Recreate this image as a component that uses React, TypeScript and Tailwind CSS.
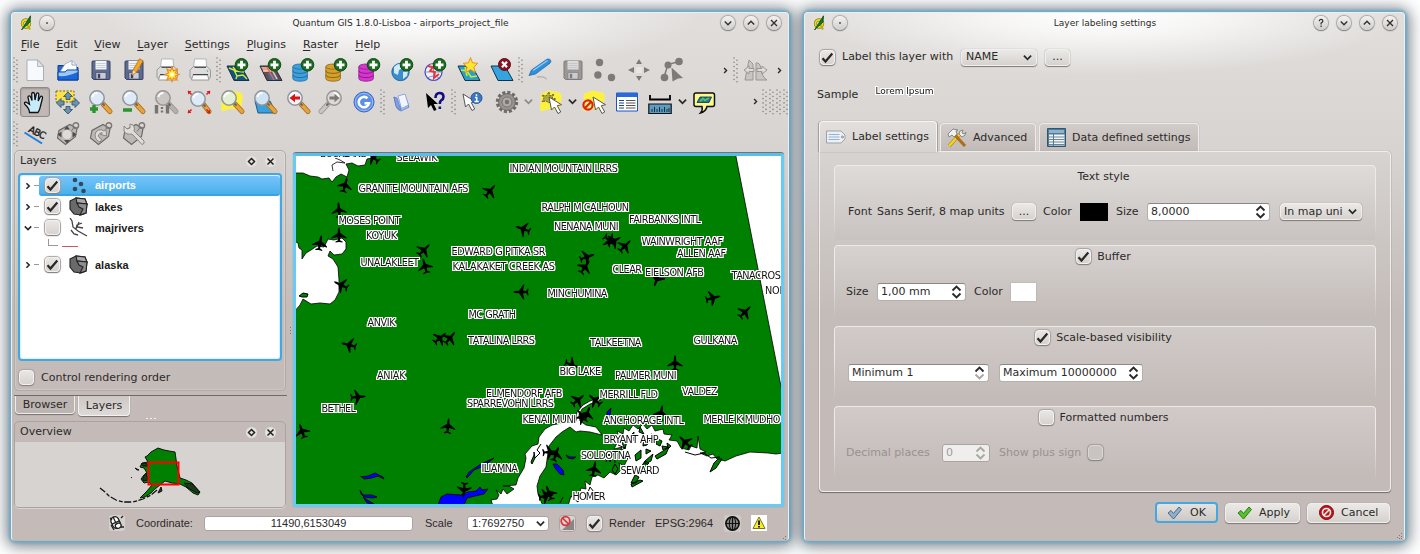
import React from "react";

/* ---------- toolbar icons, all on a 24x24 grid ---------- */

const Plus = () => (
  <g>
    <circle cx="15.5" cy="6.8" r="6.3" fill="#1d6b22" stroke="#0f4a14" />
    <path d="M15.5 2.8v8M11.5 6.8h8" stroke="#fff" strokeWidth="2.8" />
  </g>
);
const Db = ({ c, d }: { c: string; d: string }) => (
  <g>
    <path d="M.8 9v11.5c0 3.6 14.6 3.6 14.6 0V9z" fill={c} stroke={d} strokeWidth=".8" />
    <ellipse cx="8.1" cy="8.6" rx="7.3" ry="2.6" fill={c} stroke={d} strokeWidth=".8" />
    <path d="M.8 12.8c0 3.4 14.6 3.4 14.6 0M.8 17c0 3.4 14.6 3.4 14.6 0" fill="none" stroke={d} />
  </g>
);
const Lens = ({ cx = 9, cy = 8, f = "#dfeaf8", s = "#8f959c", h = "#e8a33d", d = "#a06a1c" }) => (
  <g>
    <path d={`M${cx + 6} ${cy + 6}L22 21.5`} stroke={d} strokeWidth="5" strokeLinecap="round" />
    <path d={`M${cx + 6} ${cy + 6}L22 21.5`} stroke={h} strokeWidth="3.4" strokeLinecap="round" />
    <path d={`M${cx + 5} ${cy + 5}l2.6 2.6`} stroke="#666" strokeWidth="2" />
    <circle cx={cx} cy={cy} r="7.2" fill={f} stroke={s} strokeWidth="1.5" />
    <path d={`M${cx - 4.6} ${cy - 1}a5 5 0 0 1 5-4`} stroke="#fff" strokeWidth="1.8" fill="none" />
  </g>
);
const Floppy = ({ c, e, p = "#f2f4f8" }: { c: string; e: string; p?: string }) => (
  <g>
    <path d="M3.5 3h16.5q1 0 1 1v16.5q0 1-1 1H4.5l-1.5-1.5V4z" fill={c} stroke={e} />
    <path d="M6.5 3h11v8.5h-11z" fill={p} />
    <path d="M7.5 5.5h9M7.5 7.5h9M7.5 9.5h9" stroke="#b9bec9" strokeWidth=".7" />
    <path d="M7 14.5h10v6.5H7z" fill="#c9ccd3" stroke={e} strokeWidth=".6" />
    <path d="M8.8 15.8h2.4v4.4H8.8z" fill={e} />
  </g>
);
const Printer = () => (
  <g>
    <path d="M6.5 1h11.5l.8 9H5.5z" fill="#fdfdfd" stroke="#aaa" strokeWidth=".8" />
    <path d="M2 12l3.5-3.5h13.500L22.500 12v7q0 1-1 1h-18.500q-1 0-1-1z" fill="#dcdcdc" stroke="#8a8a8a" strokeWidth=".8" />
    <path d="M6.5 9.5h11.5" stroke="#555" />
    <path d="M5 17h14.5l1.5 5H3.5z" fill="#fbfbfb" stroke="#888" strokeWidth=".8" />
    <path d="M5 16.5h15" stroke="#444" />
    <circle cx="19.5" cy="13" r=".8" fill="#4b4" />
  </g>
);
const Burst = () => (
  <g>
    <path d="M17 9l1.500 4 3.500-2-1.500 4 3.500 1.500-3.500 1.500 1.500 4-3.500-2-1.500 3.500-1.500-3.500-3.500 2 1.500-4-3.500-1.500 3.500-1.500-1.500-4 3.500 2z" fill="#ffe93b" stroke="#f08a1c" strokeWidth="1.2" />
    <circle cx="17" cy="16.5" r="2" fill="#fffde0" />
  </g>
);
const Tag = ({ children }: { children?: React.ReactNode }) => (
  <g>
    <path d="M1.500 16L3 8.500 14 2.500l7 4-1.500 8L9.500 22.500z" fill="#bcb8b6" stroke="#6d6967" strokeWidth="1.2" />
    <circle cx="19.8" cy="3.5" r="2.8" fill="none" stroke="#7b7775" strokeWidth="1.4" />
    <path d="M18 5.5l-3 4" stroke="#7b7775" />
    {children}
  </g>
);
const MapTile = ({ c }: { c: string }) => (
  <path d="M1 8h14l8 14.500H8z" fill={c} stroke="#13324d" strokeWidth="1" />
);
const Pointer = ({ x, y }: { x: number; y: number }) => (
  <path transform={`translate(${x} ${y})`} d="M0 0l2.500 13 3-3 3.500 6.500 2.700-1.500-3.400-6.300 4.200-1z" fill="#fff" stroke="#555" strokeWidth="1" />
);
const Blob = () => (
  <path d="M2 4.500q2-2.500 6-2.500 3-2.500 7 0 6 0 7 2.500 1 4-.5 7 1 5-2 7-5 1-8 0-4 0-8 2.500-3 0-2-4 1-7 .5-12.500z" fill="#fff13a" stroke="#f5ee6a" />
);

const icons: Record<string, React.ReactNode> = {
  file: (
    <g>
      <path d="M4 2h11l5.500 6v14.500H4z" fill="#f8f9fc" stroke="#a9adb8" />
      <path d="M14.500 2v6.500h6z" fill="#dfe3ec" stroke="#a9adb8" strokeWidth=".8" />
    </g>
  ),
  open: (
    <g>
      <path d="M2 10V7.500h7l1 2h12V22H2z" fill="#2767c8" stroke="#0c3f96" />
      <path d="M4 14L9 6l7-3.500L20.500 7v7z" fill="#fbfcfe" stroke="#8fa4c4" strokeWidth=".8" />
      <path d="M16 2.500v4.500h4.500" fill="none" stroke="#8fa4c4" />
      <path d="M2 14h7l2-2h11v10H2z" fill="#1c68d8" stroke="#0c3f96" />
      <path d="M2.600 18q9 1 19-4v-1.500H11l-2 2H2.600z" fill="#9cc8f8" />
    </g>
  ),
  save: <Floppy c="#5d6b92" e="#39425e" />,
  saveas: (
    <g>
      <Floppy c="#5d6b92" e="#39425e" />
      <path d="M10 17l1-5L17.500.8l3.700 2L14.500 14z" fill="#f7a823" stroke="#b36e0c" strokeWidth=".8" />
      <path d="M10 17l1-5 3.500 2z" fill="#fbe3b8" stroke="#a47434" strokeWidth=".5" />
    </g>
  ),
  printnew: (<g><Printer /><Burst /></g>),
  print: <Printer />,
  vector: (
    <g>
      <MapTile c="#12547c" />
      <path d="M3 10l5 2 3 6 6-1 4 4M7 9l3 4 8 1M11 18l-1 3" fill="none" stroke="#d8e83a" strokeWidth="1.4" />
      <Plus />
    </g>
  ),
  raster: (
    <g>
      <MapTile c="#6d4a48" />
      <path d="M2 9h8l3 5H5z" fill="#e9a27c" /><path d="M8 15h8l4 7H11z" fill="#3f6f8c" />
      <path d="M4 13l9-1 5 9" fill="none" stroke="#f3c7a8" strokeWidth="1.5" /><path d="M8 9l7 13" stroke="#e0607a" strokeWidth="1.5" />
      <Plus />
    </g>
  ),
  db1: (<g><Db c="#3f9fd8" d="#1d6ea6" /><Plus /></g>),
  db2: (<g><Db c="#d6a02c" d="#8c6410" /><Plus /></g>),
  db3: (<g><Db c="#d735d0" d="#8d1a8c" /><Plus /></g>),
  wms: (
    <g>
      <circle cx="9.500" cy="14" r="8.700" fill="#3a8ccb" stroke="#1c5c95" strokeWidth=".8" />
      <path d="M3 9q4-4 8-3l1 4-4 2-1 5-4-2zM12 14l5-1-1 5-4 3z" fill="#cfeaf8" />
      <Plus />
    </g>
  ),
  wfs: (
    <g>
      <circle cx="9.500" cy="14" r="8.500" fill="#f3f0f3" stroke="#3848c8" strokeWidth="1.2" />
      <path d="M9.500 5.500v17M1 14h17M3.500 8q6 4 12 0M3.500 20q6-4 12 0" stroke="#6a7ae0" fill="none" strokeWidth=".8" />
      <path d="M4 8l5 1-3 4 5 1-1 6 5-4M12 8l-2 3" fill="none" stroke="#ee3333" strokeWidth="1.8" />
      <Plus />
    </g>
  ),
  newshp: (
    <g>
      <MapTile c="#2b9fc8" />
      <path d="M4 12l6 1 4 6 6-1M8 9l2 9" fill="none" stroke="#c8e83a" strokeWidth="1.6" />
      <path d="M13.500-.5l2 5.300 5.300.5-4 3.700 1.400 5.500-4.700-3-4.700 3L10.200 9l-4-3.700 5.300-.5z" fill="#ffe52e" stroke="#e8941c" strokeWidth="1" />
    </g>
  ),
  remove: (
    <g>
      <MapTile c="#35a3de" />
      <circle cx="14.500" cy="6.500" r="6" fill="#8c1220" stroke="#5e0a14" />
      <path d="M12 3.800l5 5.400M17 3.800l-5 5.400" stroke="#fff" strokeWidth="2.2" />
    </g>
  ),
  pen: (
    <g>
      <path d="M9 19q8-1 9.500 2.500" stroke="#b9b5b3" strokeWidth="1.5" fill="none" />
      <path d="M1 17.500L3.500 12 19 1.200q2.500-.8 3.500.8t-.5 3.200L7.500 16z" fill="#2f8fd8" stroke="#1d6fb5" strokeWidth=".8" />
      <path d="M5 12.500L19.500 2.500" stroke="#8fcbf4" strokeWidth="1.4" />
    </g>
  ),
  savegray: <Floppy c="#9b9795" e="#7f7b79" p="#dddad8" />,
  dots: (<g fill="#7e7a78"><circle cx="5.500" cy="4.500" r="3.700" /><circle cx="3.900" cy="17" r="3.700" /><circle cx="17.500" cy="19.500" r="3.700" /></g>),
  move4: (
    <g fill="#7e7a78">
      <path d="M12 1l3 5H9zM12 23l3-5H9zM1 12l6-3v6zM23 12l-6-3v6z" />
      <rect x="9" y="9" width="6" height="6" fill="#e9e6e4" />
    </g>
  ),
  node: (
    <g fill="#7e7a78">
      <path d="M4 19L8 6.500 19 3.500" fill="none" stroke="#7e7a78" strokeWidth="1.5" />
      <circle cx="4.500" cy="19.500" r="3.800" /><circle cx="8" cy="7" r="3.500" /><circle cx="19" cy="3.500" r="3.800" /><path d="M11.500 9.500l11.500 10.500-5 .5-5.500 3z" />
    </g>
  ),
  mirror: (
    <g fill="#c9c5c3" stroke="#9a9694">
      <path d="M2 22L6 2l4 4v16zM13 22V5q4-1 5 6 1 8 6 11z" />
      <path d="M1 12l5-4v2.500h5v3H6V16zM24 12l-5-4v2.500h-5v3h5V16z" fill="#dedbd9" />
    </g>
  ),
  hand: <path d="M6.500 22.500q0-4-4.500-8c-1.500-2 .5-3 2.200-1.700l2.300 1.500L5 7.500c-.2-2 2-2.300 2.700-.4L9 10.500 8.700 4c.1-2 2.500-2 2.800 0L12 10l1.300-6c.5-1.700 2.500-1.400 2.500.4L15.200 11l2-4c1-1.500 2.700-.7 2.300 1L17.500 16q-.5 3.500-2.500 6.500z" fill="#c7ebf8" stroke="#111" strokeWidth="1.3" />,
  pan: (
    <g>
      <path d="M1 1h18v11H1z" fill="#fbe24c" stroke="#5a4a00" strokeDasharray="2 1.5" strokeWidth=".8" />
      <path d="M13 2l4.500 4.500H15v3h-4v-3H8.500zM13 24l4.500-4.500H15v-3h-4v3H8.500zM1.500 13L6 8.500V11h3v4H6v2.500zM24.500 13L20 8.500V11h-3v4h3v2.500z" fill="#6a94ae" stroke="#36566b" strokeWidth=".9" />
    </g>
  ),
  zoomin: (<g><Lens /><path d="M6 15v8M2 19h8" stroke="#2a9430" strokeWidth="3.4" /></g>),
  zoomout: (<g><Lens /><path d="M2 20h9" stroke="#2a9430" strokeWidth="3.6" /></g>),
  zoom11: (
    <g>
      <Lens f="#c9c6c4" s="#9a9694" h="#b5b1af" d="#95918f" />
      <path d="M2.500 15v8.500M13.500 15v8.500" stroke="#777371" strokeWidth="3.4" /><path d="M8 17v2M8 20.500v2" stroke="#777371" strokeWidth="2.4" />
    </g>
  ),
  zoomfull: (
    <g>
      <Lens cx={11} cy={9} />
      <path d="M1 1l3.500 3.500M23 1l-3.500 3.500M1 23l3.500-3.500M23 23l-3.500-3.500" stroke="#dd1a1a" strokeWidth="1.5" />
      <path d="M1 1h3.500L1 4.500zM23 1h-3.500l3.500 3.500zM1 23v-3.500l3.500 3.500zM23 23h-3.500l3.500-3.500z" fill="#dd1a1a" />
    </g>
  ),
  zoomsel: (<g><Blob /><Lens f="#e2efd4" /></g>),
  zoomlayer: (<g><path d="M2 11h15l6 12H5z" fill="#3a9fda" stroke="#1a5a86" /><Lens f="#cfe4f2" /></g>),
  zoomlast: (<g><Lens cx={9} cy={8} f="#f1f3f6" /><path d="M3.500 8L9 3.800v2.700h5v3H9v2.700z" fill="#d81414" /></g>),
  zoomnext: (
    <g transform="matrix(-1 0 0 1 24 0)">
      <Lens f="#dcd9d7" s="#9a9694" h="#c9c5c3" d="#95918f" />
      <g transform="matrix(-1 0 0 1 18 0)"><path d="M14.500 8L9.500 3.800v2.700h-5v3h5v2.700z" fill="#7d7977" /></g>
    </g>
  ),
  refresh: (
    <g>
      <circle cx="12" cy="12" r="10" fill="#5c8ee6" stroke="#3d68c0" />
      <circle cx="12" cy="12" r="8.700" fill="none" stroke="#a9c6f6" strokeWidth=".8" />
      <path d="M15.500 8.300a5.200 5.200 0 1 0 1.500 5H12.500" fill="none" stroke="#fff" strokeWidth="2.6" />
    </g>
  ),
  book: (
    <g>
      <path d="M4 7l2 9q1 4 5 5l8-4-3-9-3 8-5 1z" fill="#aac2f2" stroke="#6a86cf" />
      <path d="M4 7l3 1 4 12q-4-1-5-4z" fill="#7fa0e4" stroke="#5a78c4" strokeWidth=".7" />
      <path d="M8 6l7-2 3.500 11-7 3.500z" fill="#f0f5fe" stroke="#7f99d8" strokeWidth=".8" />
    </g>
  ),
  whatsthis: (
    <g>
      <path d="M3 3l2 15 3-3 3 6 2.500-1.300L10.700 14H15z" fill="#000" />
      <path d="M12.500 8q0-5 4-5t4 4q0 2-2.500 3.500-1.200 1-1.200 3.500M16.800 16.500V19" fill="none" stroke="#101080" strokeWidth="2.6" />
    </g>
  ),
  identify: (
    <g>
      <Pointer x={2} y={4} />
      <circle cx="15.500" cy="8" r="5.500" fill="#3c77c2" stroke="#295a9b" /><path d="M15.500 4.200v1.800M14 7.500h1.700V11.300M13.500 11.500h4.300" stroke="#fff" strokeWidth="1.500" fill="none" />
    </g>
  ),
  gear: (
    <g>
      <circle cx="12" cy="12" r="9.700" fill="none" stroke="#6f6b69" strokeWidth="3" strokeDasharray="3.050 2.030" />
      <circle cx="12" cy="12" r="8.400" fill="#979391" stroke="#5f5b59" strokeWidth=".8" />
      <circle cx="12" cy="12" r="5" fill="#aeaaa8" stroke="#787472" />
      <circle cx="12" cy="12" r="2.200" fill="#77706e" />
    </g>
  ),
  select: (
    <g>
      <Blob />
      <path d="M10 2l1 4 4-2-2 4 4 1-4 1-3 3-3-2-4 1 2-4-2-3 4 1z" fill="#b0a83a" stroke="#444" strokeWidth=".8" strokeDasharray="2 1" />
      <Pointer x={10} y={7} />
    </g>
  ),
  deselect: (
    <g>
      <Blob /><Pointer x={11} y={7} />
      <circle cx="6" cy="15" r="4.600" fill="#fff" fillOpacity=".3" stroke="#e02010" strokeWidth="2.2" /><path d="M2.800 18.200l6.400-6.400" stroke="#e02010" strokeWidth="2.2" />
    </g>
  ),
  table: (
    <g>
      <path d="M1.500 3h21v18h-21z" fill="#fff" stroke="#1b55c4" />
      <path d="M1.500 3h21v4h-21z" fill="#2a68dc" />
      <path d="M4 10.500h5M4 13h5M4 15.500h5M4 18h5" stroke="#1b3f9a" /><path d="M11 10.500h9.500M11 13h9.500M11 15.500h9.500M11 18h9.500" stroke="#555" />
    </g>
  ),
  measure: (
    <g>
      <path d="M2 5v4.500h20V5" fill="none" stroke="#000" strokeWidth="1.8" />
      <path d="M.8 14h22.400v9.500H.8z" fill="#5c9bc2" stroke="#111" strokeWidth="1.2" />
      <path d="M4 22v-3M6.500 22v-5M9 22v-3M11.500 22v-5M14 22v-3M16.500 22v-5M19 22v-3M21 22v-4" stroke="#12303f" />
    </g>
  ),
  tip: (
    <g>
      <path d="M4 3h16.500q2 0 2 2v9.500q0 2-2 2H15q-1 5-6.500 6.500Q11 20 10 16.500H4q-2 0-2-2V5q0-2 2-2z" fill="#fdf98c" stroke="#111" strokeWidth="1.500" />
      <path d="M8 7h11.500l-2.500 5.500H5z" fill="#2a6fae" stroke="#0e2d4c" strokeWidth=".8" /><path d="M8 11.500l3-3 2 2 4-2.500" stroke="#4fc94a" strokeWidth="1.7" fill="none" />
    </g>
  ),
  abc: (
    <g>
      <text x="5" y="9.500" transform="rotate(26 5 9)" fontSize="9.500" fontFamily="DejaVu Sans, sans-serif" textLength="18" stroke="#111" strokeWidth=".3" fill="#111">ABC</text>
      <path d="M1.500 10.500L19 21.500" stroke="#1b7ee0" strokeWidth="2" />
    </g>
  ),
  tagmove: (<Tag><circle cx="11" cy="12.500" r="4.500" fill="#dedbd9" /><path d="M11 4l3 3.500H8zM11 21.500l3-3.500H8zM1.500 12.500L5.500 9.500v6zM20.500 12.500L16.500 9.500v6z" fill="#4f4b49" /></Tag>),
  tagrot: (<Tag><path d="M6 13a5.500 5.500 0 0 1 9-4l2-1.500.5 6.500-6-1.500 2-1.500a3 3 0 0 0-4 3q0 2 3 3l-1 3q-5-1-5.500-7z" fill="#dedbd9" stroke="#8a8684" /></Tag>),
  tagedit: (<Tag><path d="M2 4l3 3 3-1V2q4 0 4.500 4l-.5 3 10 10q1 3-2 3.500L10 12q-6 1-8-3z" fill="#dedbd9" stroke="#8a8684" /></Tag>),
};

const Ico = ({ n }: { n: string }) => (
  <div className="flex h-6 w-[33px] shrink-0 items-center justify-center">
    <svg width="24" height="24" viewBox="0 0 24 24" fill="none" className="overflow-visible">{icons[n]}</svg>
  </div>
);
const handleDots = [0, 4.3, 8.6, 12.9, 17.2, 21.5];
const Handle = () => (
  <svg width="5" height="26" viewBox="0 0 5 26" className="shrink-0">
    {handleDots.map((y) => (
      <g key={y} fill="#8b8684"><circle cx="1" cy={y + 1} r=".8" /><circle cx="4" cy={y + 3.2} r=".8" /></g>
    ))}
  </svg>
);
const Chev = ({ d = "down", c = "#2c2a29", w = 9 }: { d?: "down" | "right" | "up"; c?: string; w?: number }) => (
  <svg width={w} height={w} viewBox="0 0 10 10" fill="none" className="shrink-0">
    <path d={d === "down" ? "M1 3l4 4 4-4" : d === "up" ? "M1 7l4-4 4 4" : "M3 1.500L6.500 5 3 8.500"} stroke={c} strokeWidth="2" />
  </svg>
);

/* ---------- widgets ---------- */

const Round = ({ k }: { k: string }) => (
  <div className="flex h-[14px] w-[14px] shrink-0 items-center justify-center rounded-full bg-linear-to-b from-[#f4f3f2] to-[#d0cdca] shadow-[0_1px_1px_#86817f,0_0_1px_1px_#aaa6a4]">
    <svg width="10" height="10" viewBox="0 0 10 10" fill="none" stroke="#33302f" strokeWidth="1.4">
      {k === "dot" && <circle cx="5" cy="5" r=".9" fill="#444" stroke="none" />}
      {k === "down" && <path d="M1.800 3.500L5 6.700l3.200-3.200" />}
      {k === "up" && <path d="M1.800 6.500L5 3.300l3.200 3.200" />}
      {k === "x" && <path d="M2 2l6 6M8 2L2 8" />}
      {k === "q" && <path d="M3.300 3.200q0-1.800 1.800-1.800t1.800 1.500Q6.900 4 5.100 5v1.400M5.100 7.500V9" strokeWidth="1.2" />}
    </svg>
  </div>
);
const Logo = () => (
  <svg width="13" height="16" viewBox="0 0 13 16" fill="none">
    <circle cx="6" cy="8.500" r="3.600" stroke="#7c7a10" strokeWidth="3.2" /><circle cx="6" cy="8.500" r="3.600" stroke="#e4d81c" strokeWidth="2" />
    <path d="M8 11l2 3.500" stroke="#b5ac14" strokeWidth="2" />
    <path d="M1.500 15L10.500.8l-.5 6.200L4.500 12z" fill="#1d7a24" stroke="#07420c" strokeWidth=".8" />
  </svg>
);
const Check = ({ on = false, dim = false }: { on?: boolean; dim?: boolean }) => (
  <div className={dim
    ? "flex h-[15px] w-[15px] shrink-0 items-center justify-center rounded-[4px] border border-[#dcd8d5] bg-[#c9c4c1] shadow-[0_1px_1px_#8b8583,0_0_1px_1px_#a39d9a]"
    : "flex h-[15px] w-[15px] shrink-0 items-center justify-center rounded-[4px] border border-[#f3f1f0] bg-linear-to-b from-[#e9e7e5] to-[#d6d2cf] shadow-[0_1px_1px_#857f7d,0_0_1px_1px_#a9a4a2]"}>
    {on && (
      <svg width="13" height="13" viewBox="0 0 13 13" fill="none"><path d="M1.500 7.200l3 3.300 6.800-8" stroke="#2a2827" strokeWidth="2.2" /></svg>
    )}
  </div>
);
const btn = "flex shrink-0 items-center rounded-[4px] border border-[#f1efee] bg-linear-to-b from-[#ebe9e7] to-[#d6d2ce] shadow-[0_1px_1px_#7e7977,0_0_1px_#8e8987]";
const field = "flex shrink-0 items-center justify-between rounded-[3px] border border-[#b5afad] border-t-[#8c8785] bg-white";
const Arrows = ({ up = "#2c2a29", dn = "#2c2a29" }: { up?: string; dn?: string }) => (
  <svg width="11" height="14" viewBox="0 0 11 14" fill="none" strokeWidth="1.9">
    <path d="M1.500 5.500l4-4 4 4" stroke={up} /><path d="M1.500 8.500l4 4 4-4" stroke={dn} />
  </svg>
);
const TitleBar = ({ title, q }: { title: string; q?: boolean }) => (
  <div className="flex h-[19px] shrink-0 items-center justify-between pl-[8px] pr-[7px]">
    <div className="flex w-[90px] items-center gap-[7px]"><Logo /><Round k="dot" /></div>
    <span className="text-[9px] leading-[12px] whitespace-nowrap">{title}</span>
    <div className="flex w-[90px] items-center justify-end gap-[9px]">
      {q && <Round k="q" />}<Round k="down" /><Round k="up" /><Round k="x" />
    </div>
  </div>
);
const Window = ({ cls, children }: { cls: string; children: React.ReactNode }) => (
  <div className={`${cls} h-[529px] shrink-0 rounded-[5px] shadow-[0_0_3px_2px_#6fa8c6,0_1px_15px_5px_rgba(78,90,100,0.72)]`}>
    <div className="relative z-10 flex h-full w-full flex-col overflow-hidden rounded-[4px] border border-[#e9f0f3] border-b-[#b5b9ba] bg-[radial-gradient(ellipse_300px_62px_at_50%_0,#ffffff_0%,rgba(255,255,255,0.75)_35%,rgba(255,255,255,0)_100%),linear-gradient(180deg,#e1dedc_0px,#d6d3d0_140px,#c4bcb9_300px,#c4bab8_100%)]">
      {children}
    </div>
  </div>
);

/* White outline drawn behind a whole run of text, so that close letters do not cover each other. */
const Halo = ({ id }: { id: string }) => (
  <filter id={id} x="-5%" y="-5%" width="110%" height="110%" colorInterpolationFilters="sRGB">
    <feMorphology in="SourceAlpha" operator="dilate" radius="1" result="fat" />
    <feGaussianBlur in="fat" stdDeviation="0.35" result="soft" />
    <feColorMatrix in="soft" type="matrix" values="0 0 0 0 1  0 0 0 0 1  0 0 0 0 1  0 0 0 1.8 0" result="white" />
    <feMerge><feMergeNode in="white" /><feMergeNode in="SourceGraphic" /></feMerge>
  </filter>
);

/* ---------- map ---------- */

const labels: [string, number, number, number][] = [
  ["BUCKLAND", 320, 157, 48], ["SELAWIK", 396.5, 161.3, 41], ["INDIAN MOUNTAIN LRRS", 509.5, 172, 108.5],
  ["GRANITE MOUNTAIN AFS", 358.5, 192.2, 110], ["MOSES POINT", 338.5, 224, 62], ["KOYUK", 366, 238.5, 31],
  ["UNALAKLEET", 360.5, 265.5, 58.5], ["EDWARD G PITKA SR", 451.5, 254.5, 94], ["KALAKAKET CREEK  AS", 452.5, 269.8, 102.5],
  ["RALPH M CALHOUN", 541.5, 210.6, 87.5], ["NENANA MUNI", 554, 229.8, 64.5], ["FAIRBANKS INTL", 629, 222.7, 72],
  ["WAINWRIGHT AAF", 641.5, 244.8, 81.5], ["ALLEN AAF", 677, 256.8, 49], ["CLEAR", 612.5, 273, 29.5],
  ["EIELSON AFB", 645, 275.8, 59], ["TANACROSS", 731.5, 279.2, 55], ["NORTHWAY", 765, 293.5, 54],
  ["MINCHUMINA", 547.5, 296.6, 60], ["MC GRATH", 468.5, 317.6, 47.5], ["ANVIK", 367.5, 326.1, 28],
  ["TATALINA LRRS", 468, 343.7, 67], ["TALKEETNA", 590, 345.9, 51.5], ["GULKANA", 693.5, 344.1, 44],
  ["ANIAK", 377, 378.7, 28.5], ["BETHEL", 321.5, 411.6, 34.5], ["BIG LAKE", 559.5, 375.2, 41.5],
  ["PALMER MUNI", 615, 379, 61.5], ["VALDEZ", 682, 395, 35.5], ["ELMENDORF AFB", 486, 396.6, 76.5],
  ["SPARREVOHN LRRS", 467, 406.7, 87], ["MERRILL FLD", 599.5, 398.4, 58.5], ["KENAI MUNI", 522.5, 423.2, 53.5],
  ["ANCHORAGE INTL", 603.5, 424.4, 80.5], ["MERLE K MUDHO", 703.5, 423.2, 77], ["BRYANT AHP", 603.5, 443.3, 55],
  ["SOLDOTNA", 581, 459.2, 50], ["ILIAMNA", 481.5, 471.6, 36.5], ["SEWARD", 620.5, 473.8, 39], ["HOMER", 572.5, 499.7, 33],
];
const planes: [number, number, number][] = [
  [373, 157, -50], [345, 185, 15], [339, 210, -5], [339, 235, 0], [320, 243, 10], [490, 191, 40], [523, 229, -70],
  [424, 250, 45], [425, 266, -15], [341, 285, -65], [521, 292, -90], [440, 338, 50], [450, 338, 40], [349, 345, -75],
  [358, 397, 85], [302, 431, -20], [448, 426, 5], [464, 490, 185], [610, 241, 130], [614, 241, 60], [625, 246, 45],
  [587, 257, 70], [585, 267, 35], [657, 279, 200], [713, 298, 75], [745, 312, 45], [572, 365, 110], [675, 363, 0],
  [578, 400, 50], [595, 400, -50], [582, 417, 80], [587, 414, 20], [661, 413, 10], [685, 442, -45], [550, 452, 85],
  [556, 454, 20], [594, 469, 10], [546, 496, 80], [549, 493, -20],
];
const PLANE = "M0-8L1-6 1.300-2 7.500 2.300V3.400L1.500 2 .9 5.200 3.500 6.600V7.600L0 7-3.500 7.600V6.600L-.9 5.200-1.500 2-7.500 3.400V2.300L-1.300-2-1-6z";

const MapView = () => (
  <svg width="485" height="348" viewBox="296 156 485 348" className="block">
    <defs><Halo id="map-halo" /></defs>
    <path d="M296 156h485v348H296z" fill="#008000" />
    <g fill="#fff" stroke="#000" strokeWidth=".8" strokeLinejoin="bevel">
      <path d="M294 154H371L372 158 367 159 365 165 358 166 352 163 346 164 349 170 347 177 341 174 336 177 332 182 329 178 322 179 318 177 310 176 303 173 294 173z" />
      <path d="M333 171L332 165 337 162 345 163 340 160 335 158" fill="none" />
      <path d="M294 241L298 243 299 248 302 250 302 259 306 253 311 250 317 246 324 247 328 239 334 240 342 238 346 242 346 249 342 254 334 255 330 251 328 256 333 259 338 267 339 280 339 292 335 300 330 304 320 303 311 304 303 299 300 305 294 312z" />
      <path d="M735.500 154L781.500 389H790V154z" />
      <path d="M545 429L552 425 562 423 575 422 577 412 583 405 590 401 598 398 601 400 590 404 582 409 579 415 580 421 586 425 596 427 602 435 590 432 580 431 576 432 570 427 562 432 556 437 549 446 547 460 546 467 540 476 537 486 538 494 543 506H493L491 500 497 499 499 495 496 490 501 494 503 489 507 494 514 489 509 486 503 486 516 485 518 478 524 468 526 458 525 454 532 446 538 444 539 437z" />
      <path d="M568 506L571 496 574 500 575 491 579 496 581 488 586 489 585 481 590 485 592 477 598 475 604 478 610 472 616 475 621 470 619 463 624 466 628 458 621 460 626 453 619 455 622 447 614 449 618 441 613 438 619 437 617 431 623 434 624 428 629 431 633 425 638 429 643 424 647 429 652 425 655 431 663 429 664 434 672 435 669 440 677 441 681 448 689 450 691 446 697 448 698 436 700 449 706 452 700 453 707 456 713 454 717 459 725 461 736 456 750 452 768 453 776 454 790 452V506z" />
    </g>
    <g fill="#008000" stroke="#000" strokeWidth="1" strokeLinejoin="bevel">
      <path d="M299 296l4-3 5 1-1 3-5 0zM531 462l3-7 0-3 1 6-3 6zM622 443l3-7 2 5-2 8zM630 436l4-4-1 9-3 3zM631 483l4-8 4 2-3 6-5 0zM639 470l6-9 4 2-6 6zM645 461l8-7-2 7-6 3zM655 456l8-5 6-4-3 7-9 5zM643 440l8-3-4 8-4 1zM656 438l6 3-2 5-4-2zM667 443l4 3-3 3zM640 427l4 7-5-2zM651 434l6 2-4 3zM635 455l6-5 0 8-5 3zM612 470l3-6 3 5-3 5zM646 449l5 2-5 3zM631 484l9-4 3 1-11 6zM662 446l6 1-5 3z" />
      <path d="M710 472l4-9 4-4 4 0-6 9z" />
    </g>
    <path d="M606 462l3-8 1 8 4-11 1 12M605 452l7 3 6-3M618 445l7 3-6 3 8 3M685 452l10 3 9-2 7 5 9-1M587 495l3-8 4 5M574 499l4 3 3-10M560 503l3-6M541 444l-4 6 3 3-5 5" fill="none" stroke="#000" strokeWidth="1" />
    <g fill="#00f" stroke="#000" strokeWidth=".8">
      <path d="M438 505l3-8 6-3 14 1 7-3 8-1 4-4 2 3 6-1-4 5-9 2-8 2-3 7z" />
      <path d="M361 476l3 3 8-1 6-2 6 3-1-2-8-4-7 3-7 1zM360 490l3 5 9 0 5 2-4 1-9-1-3-3zM363 497l6 4 5 3-7-1zM466 477l3-5 12-8 13-6-10 8-10 4-7 8z" />
      <path d="M553 464l4 0 6 6 1 5-4-1-5-6zM566 455l4 2 6 0-3 2-5-1zM607 412l4-4-1 7-3 2z" />
    </g>
    <g fill="#000">
      {planes.map(([x, y, r], i) => <path key={i} d={PLANE} transform={`translate(${x} ${y}) rotate(${r})`} />)}
    </g>
    <g fontFamily="DejaVu Sans, sans-serif" fontSize="9.7" fill="#111" filter="url(#map-halo)" style={{ whiteSpace: "pre" }}>
      {labels.map(([t, x, y, w]) => <text key={t} x={x} y={y} textLength={w}>{t}</text>)}
    </g>
  </svg>
);

const Overview = () => (
  <svg width="270" height="64" viewBox="15 443 270 64" className="block">
    <path d="M147 456l4-4 7-4 6 2 5 1 6 1 2 14 3 12 6 2 6 3 8 9-2 3-5-2-7-6-6-3-8-1-7-2-5 4-5 4-4 4-6 4-5 1 7-7 5-6-3-3-5 1-3-4 3-4 3-2-3-5-4-1 2-4 6-1-3-5z" fill="#008000" stroke="#111" strokeWidth="1" />
    <path d="M157 490l-6 5-8 4-10 3-10 0-7-2-7-4-4-4-5-4" fill="none" stroke="#111" strokeWidth="1.3" strokeDasharray="7 1.5 4 2" />
    <path d="M184 483l8 1 8 8-3 1-9-5z M158 493l3-6 1 4z M143 477l3-4 2 7-5 1z M141 464l5-1 2 3-5 0z M135 468l4 2-2 0zM131 477l1 1" fill="#1a3a1a" stroke="#111" />
    <path d="M148.500 462.500h30v22h-30z" fill="none" stroke="#f00" strokeWidth="2" />
  </svg>
);

/* ---------- layers dock ---------- */

const Poly = () => (
  <svg width="19" height="19" viewBox="0 0 19 19" fill="#6a6a6a" stroke="#222" strokeWidth="1.1">
    <path d="M1 4L7 1l9 1 2 5-1 9-5 2-7-1-4-5z" /><path d="M7 1l1 5 10 1-2-5z" fill="#a8a8a8" /><path d="M8 6l2 4 4 2-3 6 6-2 1-9z" fill="#8d8d8d" />
  </svg>
);
const layerIcons: Record<string, React.ReactNode> = {
  points: <svg width="19" height="19" viewBox="0 0 19 19" fill="#2f4a5c"><circle cx="6" cy="4" r="2.3" /><circle cx="12" cy="8" r="2.3" /><circle cx="6" cy="13" r="2.3" /><circle cx="14.5" cy="15" r="2.3" /></svg>,
  lines: <svg width="19" height="19" viewBox="0 0 19 19" fill="none" stroke="#444" strokeWidth="1.3"><path d="M1 0l2 3 1 6 5 4 9 5M13 5l-5 2-1 4M10 4l-2 5 6 1M2 12l3 4 4 1" /></svg>,
  poly: <Poly />,
};
const Layer = ({ name, icon, on, open, sel }: { name: string; icon: string; on?: boolean; open?: boolean; sel?: boolean }) => (
  <div className="flex h-[21px] shrink-0 items-center">
    <div className="flex w-[19px] items-center pl-[4px]"><Chev d={open ? "down" : "right"} w={8} /><div className="ml-[2px] h-px w-[5px] bg-[#999]" /></div>
    <div className={sel
      ? "flex h-[20px] flex-1 items-center rounded-[3px] border-b-2 border-[#3aa3e3] bg-linear-to-b from-[#74c4fa] to-[#4bb0ea] pl-[6px] pt-px text-white"
      : "flex h-[21px] flex-1 items-center pl-[6px] text-[#1c1b1a]"}>
      <Check on={on} />
      <div className="ml-[9px] flex w-[19px]">{layerIcons[icon]}</div>
      <span className="ml-[7px] font-['Liberation_Sans',sans-serif] text-[11px] font-bold">{name}</span>
    </div>
  </div>
);
const DockTitle = ({ t }: { t: string }) => (
  <div className="flex h-[20px] shrink-0 items-center pl-[5px] pr-[9px]">
    <span className="flex-1 text-[11px]">{t}</span>
    <div className="mr-[8px] flex h-[11px] w-[11px] items-center justify-center rounded-full bg-[#e4e1df]">
      <svg width="9" height="9" viewBox="0 0 9 9" fill="none"><path d="M4.500 1.500l3 3-3 3-3-3z" stroke="#222" strokeWidth="1.5" /></svg>
    </div>
    <div className="flex h-[11px] w-[11px] items-center justify-center rounded-full bg-[#e4e1df]">
      <svg width="9" height="9" viewBox="0 0 9 9" fill="none"><path d="M1.500 1.500l6 6M7.500 1.500l-6 6" stroke="#222" strokeWidth="1.5" /></svg>
    </div>
  </div>
);
const menus = ["File", "Edit", "View", "Layer", "Settings", "Plugins", "Raster", "Help"];

const MainWindow = () => (
  <Window cls="w-[778px]">
    <TitleBar title="Quantum GIS 1.8.0-Lisboa - airports_project_file" />
    <div className="flex h-[22px] shrink-0 items-center gap-[16.8px] pl-[9px] pt-[4px]">
      {menus.map((m) => <span key={m}><span className="underline underline-offset-2">{m[0]}</span>{m.slice(1)}</span>)}
    </div>
    <div className="flex h-[32px] shrink-0 items-center pl-px">
      <Handle />
      {["file", "open", "save", "saveas", "printnew", "print"].map((n) => <Ico key={n} n={n} />)}
      <div className="w-[5px]"><Handle /></div>
      {["vector", "raster", "db1", "db2", "db3", "wms", "wfs", "newshp", "remove"].map((n) => <Ico key={n} n={n} />)}
      <Handle />
      {["pen", "savegray", "dots", "move4", "node"].map((n) => <Ico key={n} n={n} />)}
      <div className="flex w-[45px] justify-end pr-[4px]"><Chev d="right" w={7} /></div>
      <Handle /><Ico n="mirror" />
      <div className="pl-[5px]"><Chev d="right" w={7} /></div>
    </div>
    <div className="flex h-[31px] shrink-0 items-center pl-px">
      <Handle />
      <div className="-mx-px ml-[2px] flex h-[30px] w-[30px] items-center justify-center rounded-[3px] border border-[#8e8987] bg-[#bfb8b6] shadow-[inset_0_1px_2px_#9b9492]"><Ico n="hand" /></div>
      <div className="ml-px flex">
        {["pan", "zoomin", "zoomout", "zoom11", "zoomfull", "zoomsel", "zoomlayer", "zoomlast", "zoomnext", "refresh"].map((n) => <Ico key={n} n={n} />)}
      </div>
      <Handle />
      {["book", "whatsthis"].map((n) => <Ico key={n} n={n} />)}
      <Handle />
      <Ico n="identify" />
      <div className="ml-px flex"><Ico n="gear" /></div>
      <div className="flex w-[12px] justify-center"><Chev c="#8f8b89" /></div>
      <Ico n="select" />
      <div className="flex w-[10px] justify-center"><Chev /></div>
      <Ico n="deselect" /><Ico n="table" /><Ico n="measure" />
      <div className="flex w-[11px] justify-center"><Chev /></div>
      <Ico n="tip" />
      <div className="flex w-[39px] justify-end"><Chev d="right" w={7} /></div>
      <div className="ml-[3px] flex gap-[2px]"><Handle /><Handle /><Handle /><Handle /></div>
    </div>
    <div className="flex h-[33px] shrink-0 items-center pl-px">
      <Handle />
      {["abc", "tagmove", "tagrot", "tagedit"].map((n) => <Ico key={n} n={n} />)}
    </div>
    <div className="flex h-[360px] shrink-0">
      <div className="flex w-[275px] flex-col pl-[2px]">
        <div className="flex h-[241px] w-[272px] flex-col rounded-[5px] border border-[#b1aaa7] px-[3px] shadow-[inset_0_0_0_1px_rgba(255,255,255,0.2)]">
          <div className="-mx-[3px]"><DockTitle t="Layers" /></div>
          <div className="mt-[2px] flex h-[188px] flex-col rounded-[4px] border-2 border-[#43a8df] bg-white shadow-[inset_0_0_2px_#7cc9f0]">
            <Layer name="airports" icon="points" on sel />
            <Layer name="lakes" icon="poly" on />
            <Layer name="majrivers" icon="lines" open />
            <div className="flex h-[16px] shrink-0 items-start pl-[28px] pt-[1px]">
              <div className="h-[7px] w-[10px] border-b border-l border-[#999]" />
              <div className="ml-[4px] mt-[7px] h-px w-[16px] bg-[#c4596c]" />
            </div>
            <Layer name="alaska" icon="poly" on />
          </div>
          <div className="mt-[9px] flex items-center gap-[7px] pl-px"><Check /><span>Control rendering order</span></div>
        </div>
        <div className="mt-[4px] flex h-[21px] items-start border-t border-[#6f6a68] pl-px">
          <div className="flex h-[18px] w-[60px] items-center justify-center rounded-b-[4px] border border-t-0 border-[#eeecea] bg-[#bdb5b2] shadow-[0_1px_1px_#75706e]">Browser</div>
          <div className="ml-[3px] flex h-[20px] w-[52px] items-center justify-center rounded-b-[4px] border border-t-0 border-[#f4f2f1] bg-linear-to-b from-[#cdc7c4] to-[#dedad8] shadow-[0_1px_1px_#75706e]">Layers</div>
        </div>
        <div className="flex h-[5px] items-center justify-center gap-[2px]">
          <div className="h-px w-[2px] bg-[#f4f2f1]" /><div className="h-px w-[2px] bg-[#f4f2f1]" /><div className="h-px w-[2px] bg-[#f4f2f1]" />
        </div>
        <div className="h-[87px] w-[272px] overflow-hidden rounded-[5px] border border-[#aaa3a0] shadow-[0_1px_0_#d9d4d2]">
          <DockTitle t="Overview" />
          <div className="bg-[#d7d3d0] pt-px"><Overview /></div>
        </div>
      </div>
      <div className="flex w-[6px] flex-col items-center justify-center gap-[2px]">
        <div className="h-px w-px bg-[#777]" /><div className="h-px w-px bg-[#777]" /><div className="h-px w-px bg-[#777]" />
      </div>
      <div className="mt-[3px] h-[354px] w-[491px] rounded-[3px] border-[3px] border-[#66ccf5] border-t-[#58bfe9] shadow-[0_-1px_0_#77726f,0_0_1px_#77726f]">
        <MapView />
      </div>
    </div>
    <div className="flex h-[26px] shrink-0 items-center pl-[97px] font-['Liberation_Sans',sans-serif] text-[11px]">
      <svg width="16" height="16" viewBox="0 0 16 16" fill="none" stroke="#222" strokeWidth="1.3"><rect width="16" height="16" rx="3" fill="#d5d1ce" stroke="none" /><g transform="rotate(-25 8 8)"><rect x="3" y="1" width="8" height="12" rx="4" fill="#fff" /><path d="M7 1v6M3 7h8" /><ellipse cx="8" cy="11" rx="3" ry="2.5" fill="#fff" /></g><path d="M2 10l3 5M12 12h3M12 3l2-2M1 3l2 2" /></svg>
      <span className="ml-[11px] w-[68px]">Coordinate:</span>
      <div className="flex h-[15px] w-[209px] items-center justify-center rounded-[3px] border border-[#a9a3a1] bg-white">11490,6153049</div>
      <span className="ml-[12px] w-[42px]">Scale</span>
      <div className="flex h-[15px] w-[82px] items-center justify-between rounded-[3px] border border-[#a9a3a1] bg-white pl-[4px] pr-[3px]">1:7692750<Chev /></div>
      <svg width="17" height="17" viewBox="0 0 17 17" fill="none" className="ml-[10px]"><rect x=".5" y=".5" width="16" height="16" rx="3" fill="#d6d2cf" stroke="#aaa4a2" /><path d="M3 15L15 4v11z" fill="#8a8583" /><circle cx="6.500" cy="6" r="4.300" stroke="#d8343c" strokeWidth="1.7" /><path d="M3.500 3l6 6" stroke="#d8343c" strokeWidth="1.7" /></svg>
      <div className="ml-[11px]"><Check on /></div>
      <span className="ml-[7px] w-[46px]">Render</span>
      <span className="w-[69px] whitespace-nowrap">EPSG:2964</span>
      <svg width="17" height="17" viewBox="0 0 17 17" fill="none"><rect width="17" height="17" rx="2" fill="#cfcac8" /><circle cx="8.500" cy="8.500" r="6.600" fill="#8a8685" stroke="#111" strokeWidth="1.6" /><path d="M8.500 1v15M1 8.500h15" stroke="#111" strokeWidth="1.2" /><ellipse cx="8.500" cy="8.500" rx="3.200" ry="6.500" stroke="#111" /></svg>
      <svg width="16" height="16" viewBox="0 0 16 16" className="ml-[10px]"><path d="M0 0h16v16H0z" fill="#fff" /><path d="M8 2l6 11.500H2z" fill="#f7f01a" stroke="#777428" strokeLinejoin="round" /><path d="M8 5.500V10M8 11v1.500" stroke="#000" strokeWidth="1.7" /></svg>
    </div>
    <div className="flex justify-end pr-px">
      <svg width="7" height="7" viewBox="0 0 7 7" fill="#7d7775"><path d="M5 0h1v1H5zM3 2h1v1H3zM5 3h1v1H5zM1 4h1v1H1zM3 5h1v1H3zM5 5h1v1H5z" /></svg>
    </div>
  </Window>
);

/* ---------- labeling dialog ---------- */

const Group = ({ title, on, plain, cls, children }: { title: string; on?: boolean; plain?: boolean; cls: string; children: React.ReactNode }) => (
  <div className={`${cls} w-[542px] shrink-0 rounded-[4px] bg-[linear-gradient(180deg,rgba(255,255,255,0.22),rgba(190,184,180,0.25)_100%)]`}>
    <div className="h-full rounded-[4px] border border-b-0 border-[#edebe9] [mask-image:linear-gradient(180deg,#000_0%,#000_35%,transparent_100%)] shadow-[0_0_1px_#8d8886]" />
    <div className="-mt-[75px] flex h-[75px] flex-col">
      <div className="flex h-[23px] items-center justify-center gap-[6px] pr-[3px]">
        {!plain && <Check on={on} />}<span className="whitespace-nowrap">{title}</span>
      </div>
      <div className="flex h-[47px] items-center">{children}</div>
    </div>
  </div>
);
const Tick = ({ c, e }: { c: string; e: string }) => (
  <svg width="15" height="14" viewBox="0 0 15 14"><path d="M1 7l3-2.500 2.500 3L12 1l2.500 2.500L6.500 13z" fill={c} stroke={e} strokeLinejoin="round" /></svg>
);

const Dialog = () => (
  <Window cls="w-[601px]">
    <TitleBar title="Layer labeling settings" q />
    <div className="mt-[16px] flex h-[18px] shrink-0 items-center pl-[15px]">
      <Check on />
      <span className="ml-[7px] w-[119px] whitespace-nowrap">Label this layer with</span>
      <div className={`${btn} h-[17px] w-[76px] justify-between pl-[4px] pr-[4px]`}>NAME<Chev /></div>
      <div className={`${btn} ml-[8px] h-[17px] w-[25px] justify-center`}>...</div>
    </div>
    <div className="mt-[16px] flex h-[25px] shrink-0 pl-[12px]">
      <span className="mt-[4px] w-[57px] leading-[18px]">Sample</span>
      <svg width="66" height="16" viewBox="0 0 66 16"><defs><Halo id="sample-halo" /></defs><text x="1.5" y="12" textLength="58" fontSize="9" fontFamily="DejaVu Sans, sans-serif" fill="#111" filter="url(#sample-halo)">Lorem Ipsum</text></svg>
    </div>
    <div className="mt-[13px] flex h-[31px] shrink-0 items-end pl-[14px]">
      <div className="relative z-10 -mb-px flex h-[31px] w-[118px] items-center rounded-t-[4px] border border-b-0 border-[#f6f5f4] bg-linear-to-b from-[#e2dfdd] to-[#d7d3d1] pl-[5px] shadow-[-1px_0_1px_#a09b99,1px_0_1px_#a09b99]">
        <svg width="21" height="14" viewBox="0 0 21 14" fill="none"><path d="M1.500 1h14.500l4 4v4l-4 4H1.500z" fill="#edf0f2" stroke="#9aa3a8" /><path d="M3.500 4.500h11M3.500 7h11M3.500 9.500h11" stroke="#8fb4d6" /><circle cx="17.500" cy="7" r="1" stroke="#888" /></svg>
        <span className="ml-[6px] whitespace-nowrap">Label settings</span>
      </div>
      <div className="ml-[3px] flex h-[28px] w-[96px] items-center rounded-t-[4px] border border-b-0 border-[#eeecea] bg-linear-to-b from-[#d1cdca] to-[#c2bab7] pl-[6px] shadow-[0_0_1px_#7f7a78]">
        <svg width="20" height="20" viewBox="0 0 20 20" fill="none"><path d="M2 18L13 6" stroke="#b38e12" strokeWidth="3.6" /><path d="M2 18L13 6" stroke="#f3d52a" strokeWidth="2.4" /><path d="M12 6q0-4 4-4l-1 3 2 1 2-2q0 4-4 5z" fill="#eee" stroke="#888" /><path d="M7 6l11 12" stroke="#b06c1a" strokeWidth="3.2" /><path d="M1 6l5-5 5 1-2 1 1 3-3 3-2-2-3 2z" fill="#f0f0f0" stroke="#888" /></svg>
        <span className="ml-[6px]">Advanced</span>
      </div>
      <div className="ml-[3px] flex h-[28px] w-[160px] items-center rounded-t-[4px] border border-b-0 border-[#eeecea] bg-linear-to-b from-[#d1cdca] to-[#c2bab7] pl-[7px] shadow-[0_0_1px_#7f7a78]">
        <svg width="19" height="19" viewBox="0 0 19 19"><path d="M.5.500h18v18H.5z" fill="#4f7b98" stroke="#2f5670" /><path d="M2 2h15v3H2z" fill="#8db4cc" /><path d="M2 6.500h4v11H2zM7 6.500h10.500v11H7z" fill="#f2f4f5" /><path d="M2 9h15.500M2 11.500h15.500M2 14h15.500M2 16.500h15.500" stroke="#587a8e" strokeWidth=".9" /></svg>
        <span className="ml-[6px] whitespace-nowrap">Data defined settings</span>
      </div>
    </div>
    <div className="ml-[14px] flex h-[341px] w-[572px] shrink-0 flex-col rounded-[4px] rounded-tl-none border border-[#f0eeec] pl-[14px] pt-[13px] shadow-[0_1px_1px_#6f6a68,0_0_1px_#8f8a88]">
      <Group title="Text style" plain cls="h-[75px]">
        <span className="ml-[14px] w-[29px]">Font</span>
        <span className="w-[135px] whitespace-nowrap">Sans Serif, 8 map units</span>
        <div className={`${btn} h-[17px] w-[24px] justify-center`}>...</div>
        <span className="ml-[7px] w-[37px]">Color</span>
        <div className="h-[18px] w-[28px] bg-black" />
        <span className="ml-[8px] w-[31px]">Size</span>
        <div className={`${field} h-[18px] w-[123px] pl-[3px] pr-[3px]`}>8,0000<Arrows /></div>
        <div className={`${btn} ml-[10px] h-[17px] w-[82px] justify-between pl-[3px] pr-[4px]`}>In map uni<Chev /></div>
      </Group>
      <Group title="Buffer" on cls="mt-[5px] h-[75px]">
        <span className="ml-[12px] w-[31px]">Size</span>
        <div className={`${field} h-[18px] w-[89px] pl-[3px] pr-[3px]`}>1,00 mm<Arrows /></div>
        <span className="ml-[8px] w-[37px]">Color</span>
        <div className="h-[18px] w-[25px] bg-white shadow-[0_0_1px_#8f8a88]" />
      </Group>
      <Group title="Scale-based visibility" on cls="mt-[6px] h-[75px]">
        <div className={`${field} ml-[14px] h-[18px] w-[141px] pl-[3px] pr-[3px]`}>Minimum 1<Arrows dn="#a9a5a3" /></div>
        <div className={`${field} ml-[10px] h-[18px] w-[144px] pl-[3px] pr-[3px]`}>Maximum 10000000<Arrows /></div>
      </Group>
      <Group title="Formatted numbers" cls="mt-[5px] h-[75px]">
        <span className="ml-[12px] w-[96px] whitespace-nowrap text-[#98918f]">Decimal places</span>
        <div className="flex h-[18px] w-[48px] items-center justify-between rounded-[3px] border border-[#aaa4a2] bg-[#efeeed] px-[3px] text-[#a09b99]">0<Arrows up="#aaa6a4" dn="#aaa6a4" /></div>
        <span className="ml-[9px] w-[89px] whitespace-nowrap text-[#98918f]">Show plus sign</span>
        <Check dim />
      </Group>
    </div>
    <div className="mt-[10px] flex h-[21px] shrink-0 items-center justify-end pr-[14px]">
      <div className="flex h-[21px] w-[63px] items-center rounded-[4px] border-2 border-[#43a8df] bg-linear-to-b from-[#e4e1df] to-[#cdc8c4] pl-[10px]"><Tick c="#8fafd0" e="#4d6b8a" /><span className="ml-[8px]">OK</span></div>
      <div className={`${btn} ml-[7px] h-[20px] w-[75px] pl-[11px]`}><Tick c="#55c22c" e="#2c7a14" /><span className="ml-[7px]">Apply</span></div>
      <div className={`${btn} ml-[7px] h-[20px] w-[83px] pl-[11px]`}>
        <svg width="15" height="15" viewBox="0 0 15 15" fill="none"><circle cx="7.500" cy="7.500" r="7" fill="#c41616" stroke="#7a0808" /><circle cx="7.500" cy="7.500" r="4" stroke="#eee" strokeWidth="1.6" /><path d="M4.800 10.200l5.400-5.400" stroke="#eee" strokeWidth="1.6" /></svg>
        <span className="ml-[7px]">Cancel</span>
      </div>
    </div>
    <div className="mt-[10px] flex justify-end pr-px">
      <svg width="7" height="7" viewBox="0 0 7 7" fill="#7d7775"><path d="M5 0h1v1H5zM3 2h1v1H3zM5 3h1v1H5zM1 4h1v1H1zM3 5h1v1H3zM5 5h1v1H5z" /></svg>
    </div>
  </Window>
);

export default function App() {
  return (
    <div className="flex h-[554px] w-[1420px] gap-[15px] overflow-hidden bg-white pl-[11px] pt-[12px] font-['DejaVu_Sans',sans-serif] text-[11px] leading-[14px] text-[#2c2a29]">
      <MainWindow />
      <Dialog />
    </div>
  );
}
